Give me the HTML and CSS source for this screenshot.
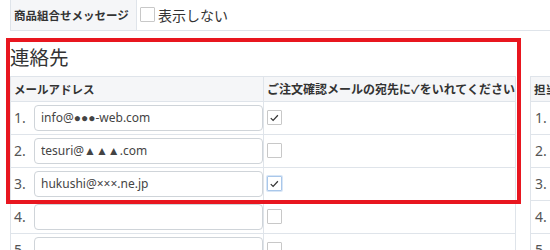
FILE: index.html
```html
<html>
<head>
    <meta http-equiv="Content-Type" content="text/html;charset=utf-8">
    <link rel="stylesheet" href="styles.css">
</head>
<body>
    <div class="page">
        <table class="opt-table">
            <tr>
                <th>商品組合せメッセージ</th>
                <td><label class="chk-label"><span class="chk"></span>表示しない</label></td>
            </tr>
        </table>

        <h2 class="section-title">連絡先</h2>

        <div class="contact-wrap">
            <table class="mail-table">
                <tr>
                    <th class="col-mail">メールアドレス</th>
                    <th class="col-check">ご注文確認メールの宛先に✓をいれてください</th>
                </tr>
                <tr>
                    <td><span class="num">1.</span><input class="mail-input" value="info@●●●-web.com"></td>
                    <td><span class="chk checked"><svg viewBox="0 0 15 15" width="14" height="14"><path d="M3.2 7.6 L5.9 10.3 L11.4 4.3" fill="none" stroke="#333" stroke-width="1.4"/></svg></span></td>
                </tr>
                <tr>
                    <td><span class="num">2.</span><input class="mail-input" value="tesuri@▲▲▲.com"></td>
                    <td><span class="chk"></span></td>
                </tr>
                <tr>
                    <td><span class="num">3.</span><input class="mail-input" value="hukushi@×××.ne.jp"></td>
                    <td><span class="chk checked focus"><svg viewBox="0 0 15 15" width="14" height="14"><path d="M3.2 7.6 L5.9 10.3 L11.4 4.3" fill="none" stroke="#333" stroke-width="1.4"/></svg></span></td>
                </tr>
                <tr>
                    <td><span class="num">4.</span><input class="mail-input" value=""></td>
                    <td><span class="chk"></span></td>
                </tr>
                <tr>
                    <td><span class="num">5.</span><input class="mail-input" value=""></td>
                    <td><span class="chk"></span></td>
                </tr>
            </table>

            <table class="staff-table">
                <tr><th>担当者</th></tr>
                <tr><td>1.</td></tr>
                <tr><td>2.</td></tr>
                <tr><td>3.</td></tr>
                <tr><td>4.</td></tr>
                <tr><td>5.</td></tr>
            </table>
        </div>

        <!-- 赤枠の注記 -->
        <div class="highlight"></div>
    </div>
</body>
</html>
```

FILE: styles.css
```css
html, body {
    margin: 0;
    padding: 0;
    overflow: hidden;
    background: #fff;
}

body {
    font-family: 'Noto Sans', 'Noto Sans CJK JP', sans-serif;
    color: #333;
}

.page {
    position: relative;
    width: 550px;
    height: 250px;
    padding-left: 10px;
    box-sizing: border-box;
    overflow: hidden;
}

table {
    border-collapse: collapse;
}

/* 上の設定行 */
.opt-table {
    width: 560px;
}

.opt-table th,
.opt-table td {
    height: 30px;
    padding: 0;
    border-left: 1px solid #dfe4ea;
    border-bottom: 1px solid #dfe4ea;
}

.opt-table th {
    width: 122px;
    padding-left: 3px;
    background-color: #f5f6f8;
    font-family: 'Noto Sans CJK JP', sans-serif;
    font-size: 11.5px;
    font-weight: bold;
    text-align: left;
    white-space: nowrap;
}

.opt-table td {
    padding-left: 3px;
}

.chk-label {
    display: flex;
    align-items: center;
    font-family: 'Noto Sans CJK JP', sans-serif;
    font-size: 14px;
}

.chk-label .chk {
    margin-right: 3px;
}

.chk {
    display: inline-flex;
    align-items: center;
    justify-content: center;
    width: 15px;
    height: 15px;
    border: 1px solid #c8c8c8;
    border-radius: 1px;
    box-sizing: border-box;
    background: #fff;
    vertical-align: middle;
}

.chk.focus {
    border-color: #a9c7ea;
    box-shadow: 0 0 0 1px #d8e6f6;
}

.section-title {
    margin: 11px 0 4px;
    height: 30px;
    font-family: 'Noto Sans CJK JP', sans-serif;
    font-size: 19.5px;
    font-weight: normal;
    line-height: 30px;
    color: #333;
}

.contact-wrap {
    display: flex;
    align-items: flex-start;
    gap: 14px;
}

.mail-table {
    width: 506px;
    flex: none;
}

.mail-table th,
.mail-table td,
.staff-table th,
.staff-table td {
    border: 1px solid #dfe4ea;
    padding: 0 0 0 3px;
    text-align: left;
}

.mail-table th,
.staff-table th {
    height: 25px;
    background-color: #f5f6f8;
    font-family: 'Noto Sans CJK JP', sans-serif;
    font-size: 11.5px;
    font-weight: bold;
    white-space: nowrap;
}

.mail-table th.col-check {
    font-size: 12px;
}

.mail-table td,
.staff-table td {
    height: 33px;
}

.col-mail {
    width: 253px;
}

.num,
.staff-table td {
    display: inline-block;
    width: 20px;
    font-size: 14px;
    color: #555;
    vertical-align: middle;
}

.staff-table td {
    display: table-cell;
    padding-left: 4px;
}

.staff-table {
    width: 200px;
    flex: none;
}

.mail-input {
    width: 229px;
    height: 26px;
    padding: 0 6px;
    border: 1px solid #cfd4d9;
    border-radius: 4px;
    box-sizing: border-box;
    font-family: 'Noto Sans', 'Liberation Sans', 'Noto Sans CJK JP', sans-serif;
    font-size: 12px;
    color: #444;
    vertical-align: middle;
}

.highlight {
    position: absolute;
    left: 6px;
    top: 38px;
    width: 515px;
    height: 166px;
    border: 4px solid #e8161f;
    box-sizing: border-box;
}
```
